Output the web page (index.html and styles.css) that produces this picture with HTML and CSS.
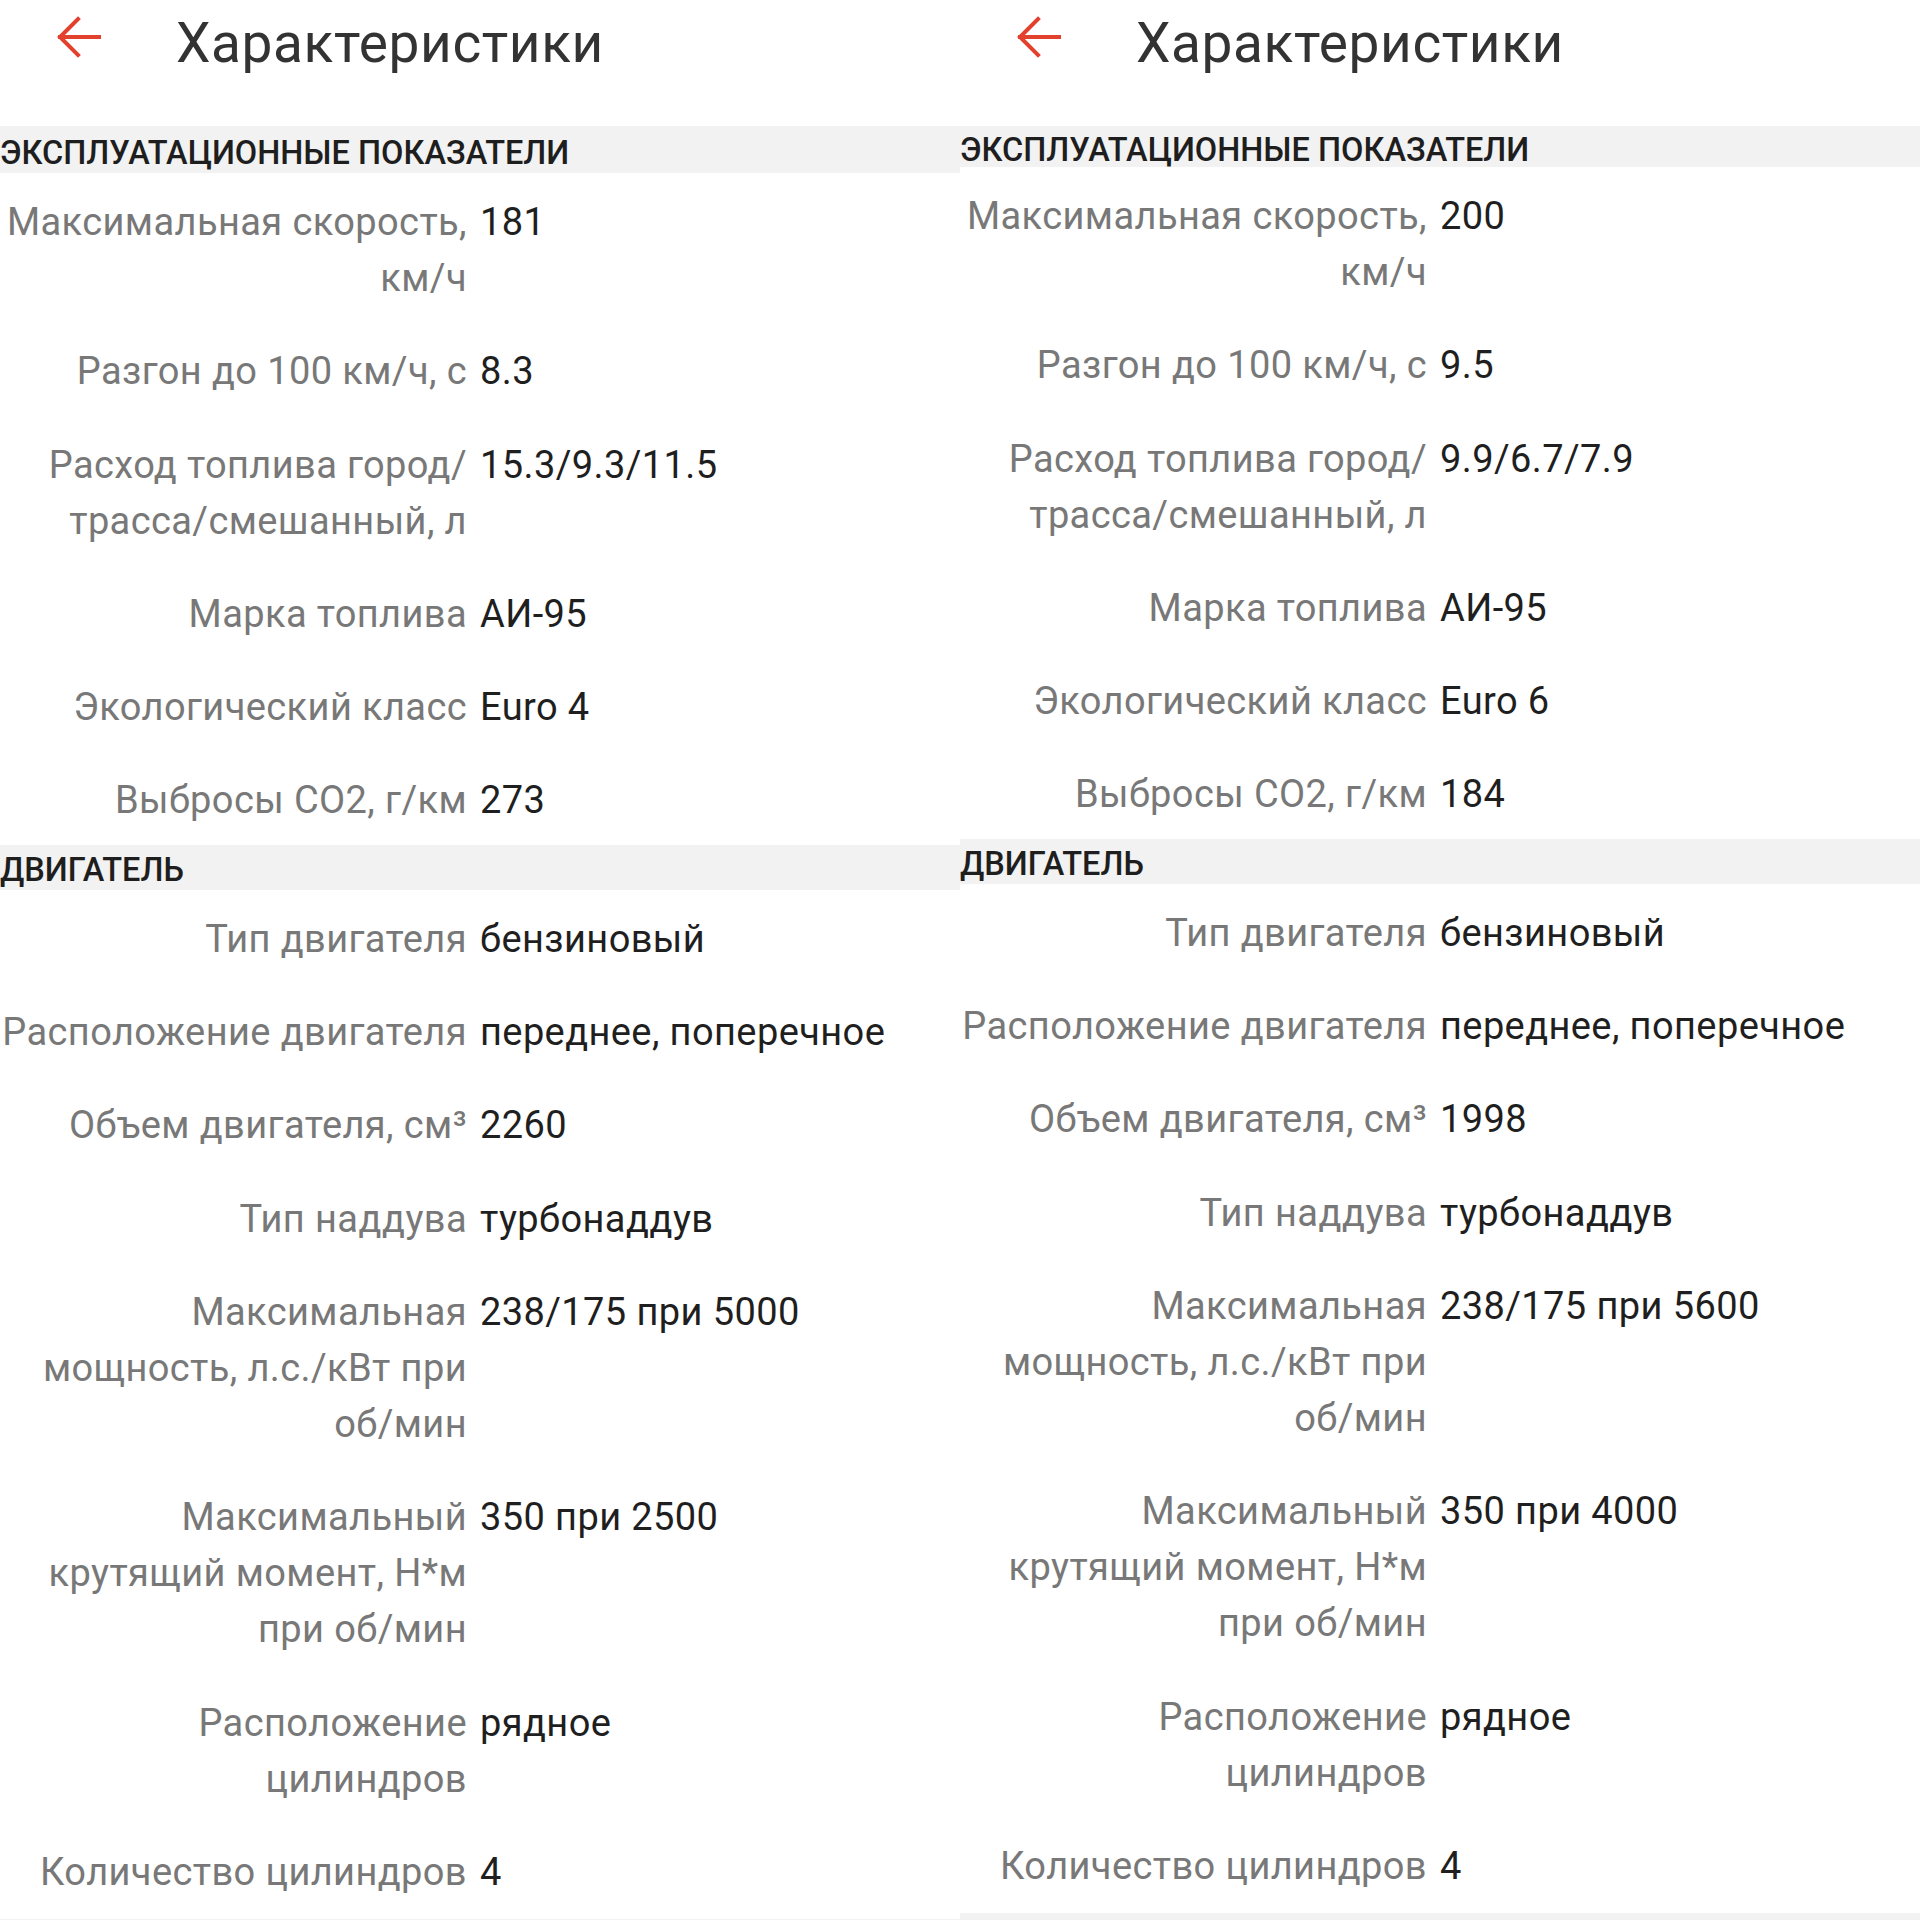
FILE: index.html
```html
<!DOCTYPE html>
<html lang="ru">
<head>
<meta charset="utf-8">
<title>Характеристики</title>
<link rel="stylesheet" href="styles.css">
</head>
<body>
<div class="screens">
  <div class="panel">
    <div class="appbar">
      <svg class="back" width="44" height="42" viewBox="0 0 44 42"><path d="M42 21H3M21 3L3 21L21 39" fill="none" stroke="#e2412e" stroke-width="4" stroke-linecap="square" stroke-linejoin="miter"/></svg>
      <div class="title">Характеристики</div>
    </div>
    <div class="band band--first">ЭКСПЛУАТАЦИОННЫЕ ПОКАЗАТЕЛИ</div>
    <div class="row"><div class="label">Максимальная скорость,<br>км/ч</div><div class="value">181</div></div>
    <div class="row"><div class="label">Разгон до 100 км/ч, с</div><div class="value">8.3</div></div>
    <div class="row"><div class="label">Расход топлива город/<br>трасса/смешанный, л</div><div class="value">15.3/9.3/11.5</div></div>
    <div class="row"><div class="label">Марка топлива</div><div class="value">АИ-95</div></div>
    <div class="row"><div class="label">Экологический класс</div><div class="value">Euro 4</div></div>
    <div class="row"><div class="label">Выбросы CO2, г/км</div><div class="value">273</div></div>
    <div class="band">ДВИГАТЕЛЬ</div>
    <div class="row"><div class="label">Тип двигателя</div><div class="value">бензиновый</div></div>
    <div class="row"><div class="label">Расположение двигателя</div><div class="value">переднее, поперечное</div></div>
    <div class="row"><div class="label">Объем двигателя, см³</div><div class="value">2260</div></div>
    <div class="row"><div class="label">Тип наддува</div><div class="value">турбонаддув</div></div>
    <div class="row"><div class="label">Максимальная<br>мощность, л.с./кВт при<br>об/мин</div><div class="value">238/175 при 5000</div></div>
    <div class="row"><div class="label">Максимальный<br>крутящий момент, Н*м<br>при об/мин</div><div class="value">350 при 2500</div></div>
    <div class="row"><div class="label">Расположение<br>цилиндров</div><div class="value">рядное</div></div>
    <div class="row"><div class="label">Количество цилиндров</div><div class="value">4</div></div>
    <div class="band band--tail"></div>
  </div>
  <div class="panel">
    <div class="appbar">
      <svg class="back" width="44" height="42" viewBox="0 0 44 42"><path d="M42 21H3M21 3L3 21L21 39" fill="none" stroke="#e2412e" stroke-width="4" stroke-linecap="square" stroke-linejoin="miter"/></svg>
      <div class="title">Характеристики</div>
    </div>
    <div class="band band--first band--short">ЭКСПЛУАТАЦИОННЫЕ ПОКАЗАТЕЛИ</div>
    <div class="row"><div class="label">Максимальная скорость,<br>км/ч</div><div class="value">200</div></div>
    <div class="row"><div class="label">Разгон до 100 км/ч, с</div><div class="value">9.5</div></div>
    <div class="row"><div class="label">Расход топлива город/<br>трасса/смешанный, л</div><div class="value">9.9/6.7/7.9</div></div>
    <div class="row"><div class="label">Марка топлива</div><div class="value">АИ-95</div></div>
    <div class="row"><div class="label">Экологический класс</div><div class="value">Euro 6</div></div>
    <div class="row"><div class="label">Выбросы CO2, г/км</div><div class="value">184</div></div>
    <div class="band">ДВИГАТЕЛЬ</div>
    <div class="row"><div class="label">Тип двигателя</div><div class="value">бензиновый</div></div>
    <div class="row"><div class="label">Расположение двигателя</div><div class="value">переднее, поперечное</div></div>
    <div class="row"><div class="label">Объем двигателя, см³</div><div class="value">1998</div></div>
    <div class="row"><div class="label">Тип наддува</div><div class="value">турбонаддув</div></div>
    <div class="row"><div class="label">Максимальная<br>мощность, л.с./кВт при<br>об/мин</div><div class="value">238/175 при 5600</div></div>
    <div class="row"><div class="label">Максимальный<br>крутящий момент, Н*м<br>при об/мин</div><div class="value">350 при 4000</div></div>
    <div class="row"><div class="label">Расположение<br>цилиндров</div><div class="value">рядное</div></div>
    <div class="row"><div class="label">Количество цилиндров</div><div class="value">4</div></div>
    <div class="band band--tail"></div>
  </div>
</div>
</body>
</html>
```
FILE: styles.css
```css
* { box-sizing: border-box; }
html, body {
  margin: 0;
  padding: 0;
  background: #ffffff;
}
body {
  font-family: Roboto, "Noto Sans", "Liberation Sans", sans-serif;
  height: 1920px;
  overflow: hidden;
}
.screens {
  display: flex;
  width: 1920px;
}
.panel {
  width: 960px;
  overflow: hidden;
  display: flex;
  flex-direction: column;
}
.appbar {
  height: 126px;
  display: flex;
  align-items: flex-start;
  padding: 16px 0 0 57px;
}
.back {
  display: block;
  flex: none;
}
.title {
  margin-left: 75px;
  font-size: 55px;
  line-height: 55px;
  letter-spacing: 0.6px;
  color: #333333;
  font-weight: 400;
}
.band {
  background: #f2f2f2;
  height: 45px;
  display: flex;
  align-items: center;
  padding: 6px 0 0 0;
  font-size: 32.5px;
  font-weight: 500;
  color: #1e1e1e;
  white-space: nowrap;
}
.band--first {
  height: 47px;
}
.band--short {
  height: 41px;
}
.band--tail {
  height: 12px;
  margin-top: 3px;
  padding: 0;
}
.row {
  display: grid;
  grid-template-columns: 467px 1fr;
  column-gap: 13px;
  padding: 21px 0 16.3px;
  font-size: 38px;
  line-height: 56px;
  letter-spacing: 0.4px;
}
.label {
  text-align: right;
  color: #787878;
}
.value {
  color: #1f1f1f;
}
```
